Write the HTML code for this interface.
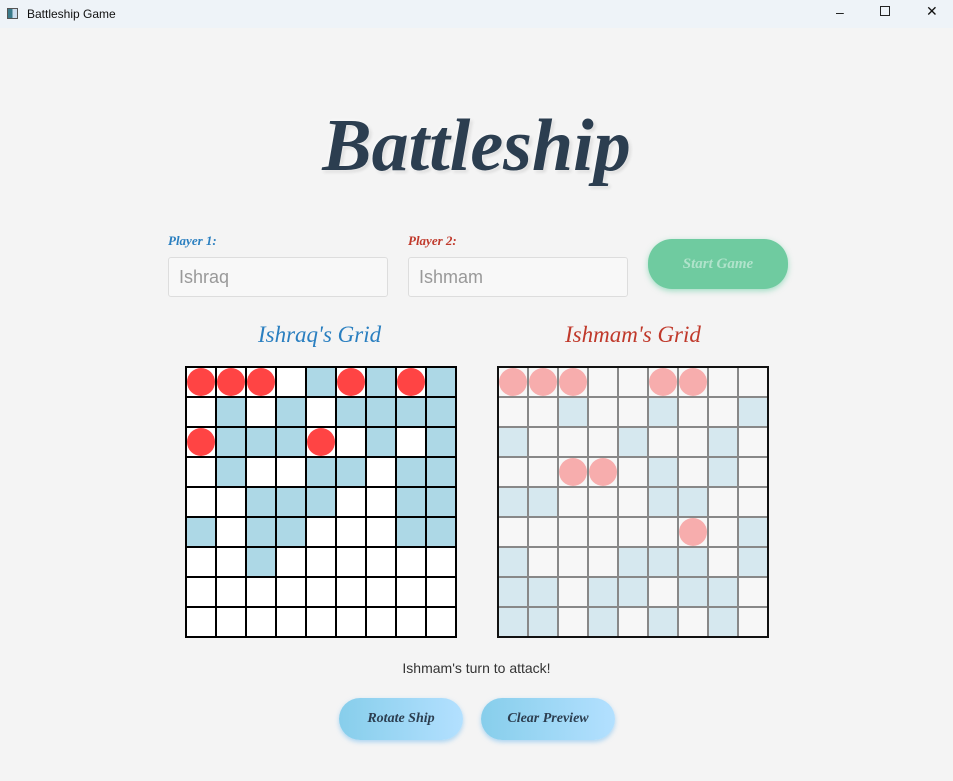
<!DOCTYPE html>
<html><head><meta charset="utf-8"><style>
*{margin:0;padding:0;box-sizing:border-box}
body{width:953px;height:781px;background:#f4f4f4;font-family:"Liberation Sans",sans-serif;position:relative;overflow:hidden}
.tb{position:absolute;left:0;top:0;width:953px;height:28px;background:#eef3f8;font-size:12px;color:#111}
.tb .ic{position:absolute;left:7px;top:8px;width:11px;height:11px;border:1px solid #555;background:linear-gradient(90deg,#3a7a8a 50%,#cde 50%)}
.tb .t{position:absolute;left:27px;top:7px}
.tb .c{position:absolute;top:4px;font-size:14px}
.title{position:absolute;left:0;width:953px;top:104px;text-align:center;font-family:"Liberation Serif",serif;font-style:italic;font-weight:bold;font-size:74px;color:#2c3e50;text-shadow:0 0 4px #fff,2px 2px 3px rgba(0,0,0,.15)}
.lbl{position:absolute;top:233px;font-family:"Liberation Serif",serif;font-style:italic;font-weight:bold;font-size:13px}
.inp{position:absolute;top:257px;width:220px;height:40px;background:#f8f8f8;border:1px solid #ddd;border-radius:3px;font-size:18px;color:#999;padding:9px 10px}
.btn{position:absolute;border-radius:24px;font-family:"Liberation Serif",serif;font-style:italic;font-weight:bold;text-align:center}
.gt{position:absolute;top:322px;font-family:"Liberation Serif",serif;font-style:italic;font-size:23px}
.grid{position:absolute;top:366px;width:272px;height:272px;overflow:hidden;display:grid;grid-template-columns:repeat(9,30px);grid-auto-rows:30px}
.grid div{position:relative}
.g1{left:185px;border:2px solid #000;background:#000;gap:0}
.g1 div{background:#fff;border-right:2px solid #000;border-bottom:2px solid #000}
.g1 div.b{background:#add8e6}
.g2{left:497px;border:2px solid #111}
.g2 div{background:#f7f7f7;border-right:2px solid #888;border-bottom:2px solid #888}
.g2 div.b{background:#d6e8ef}
.r::after{content:"";position:absolute;left:0;top:0;width:28px;height:28px;border-radius:50%;background:#ff4444}
.g2 .r::after{background:#f7adad}
</style></head><body>
<div class="tb"><span class="ic"></span><span class="t">Battleship Game</span>
<span class="c" style="left:836px">&#8211;</span><span class="c" style="left:880px;top:6px;width:10px;height:10px;border:1px solid #222"></span><span class="c" style="left:926px;top:3px">&#10005;</span></div>
<div class="title">Battleship</div>
<div class="lbl" style="left:168px;color:#2a7fc0">Player 1:</div>
<div class="lbl" style="left:408px;color:#c0392b">Player 2:</div>
<div class="inp" style="left:168px">Ishraq</div>
<div class="inp" style="left:408px">Ishmam</div>
<div class="btn" style="left:648px;top:239px;width:140px;height:50px;background:#6fcba0;color:#b0e3cb;font-size:15px;line-height:50px;box-shadow:0 2px 6px rgba(80,200,150,.5)">Start Game</div>
<div class="gt" style="left:258px;color:#2a7fc0">Ishraq's Grid</div>
<div class="gt" style="left:565px;color:#c0392b">Ishmam's Grid</div>
<div class="grid g1" id="g1"></div>
<div class="grid g2" id="g2"></div>
<div style="position:absolute;top:660px;left:0;width:953px;text-align:center;font-size:14px;color:#333">Ishmam's turn to attack!</div>
<div class="btn" style="left:339px;top:698px;width:124px;height:42px;line-height:42px;background:linear-gradient(90deg,#87ceeb,#b3e0ff);color:#2c3e50;font-size:14px;box-shadow:0 2px 5px rgba(120,190,240,.6)">Rotate Ship</div>
<div class="btn" style="left:481px;top:698px;width:134px;height:42px;line-height:42px;background:linear-gradient(90deg,#87ceeb,#b3e0ff);color:#2c3e50;font-size:14px;box-shadow:0 2px 5px rgba(120,190,240,.6)">Clear Preview</div>
<script>
var a=["RRRWBRBRB","WBWBWBBBB","RBBBRWBWB","WBWWBBWBB","WWBBBWWBB","BWBBWWWBB","WWBWWWWWW","WWWWWWWWW","WWWWWWWWW","WWWWWWWWW"];
var b=["PPPWWPPWW","WWLWWLWWL","LWWWLWWLW","WWPPWLWLW","LLWWWLLWW","WWWWWWPWL","LWWWLLLWL","LLWLLWLLW","LLWLWLWLW","WWWWWWWWW"];
function f(id,m){var g=document.getElementById(id),h="";m.forEach(function(r){for(var i=0;i<9;i++){var c=r[i];h+='<div class="'+(c=="B"||c=="L"?"b":c=="W"?"":"r")+'"></div>';}});g.innerHTML=h;}
f("g1",a);f("g2",b);
</script>
</body></html>
